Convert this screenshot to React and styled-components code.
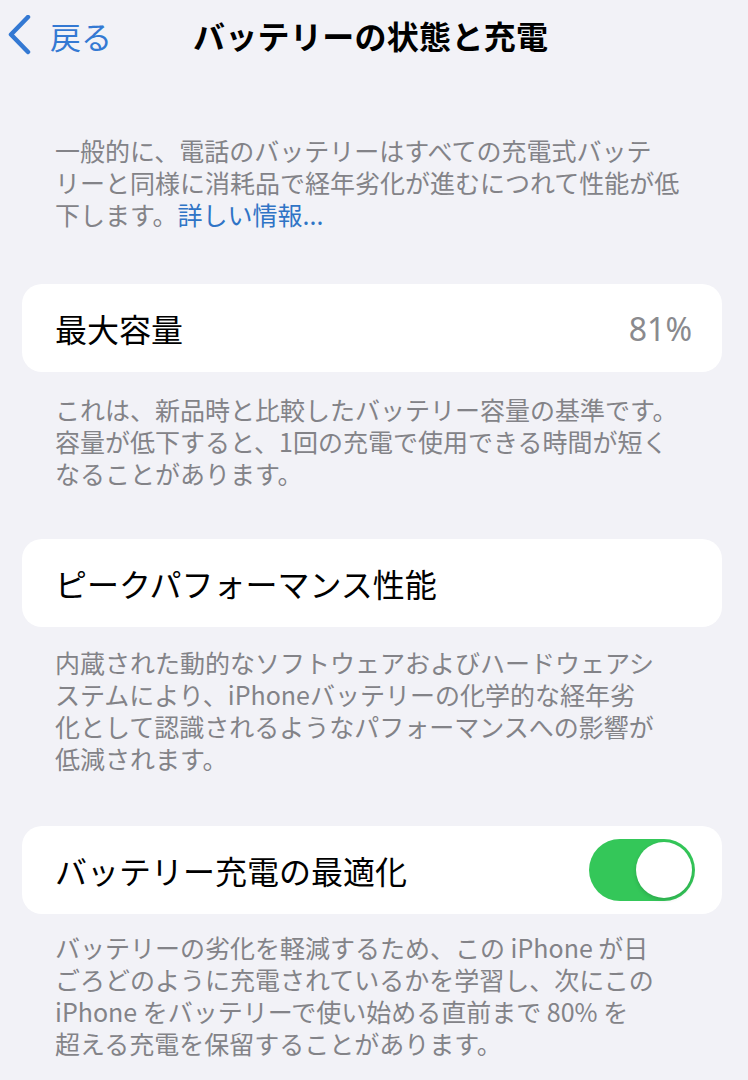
import React from "react";
import styled, { createGlobalStyle } from "styled-components";

const GlobalStyle = createGlobalStyle`
  body {
    margin: 0;
    background: #f2f2f7;
    font-family: "Noto Sans CJK JP", "Noto Sans", sans-serif;
  }
`;

const Page = styled.div`
  width: 748px;
  min-height: 1080px;
  background: #f2f2f7;
  overflow: hidden;
`;

const NavBar = styled.div`
  display: flex;
  align-items: center;
  height: 70px;
  padding-left: 7px;
`;

const Back = styled.div`
  display: flex;
  align-items: center;
  gap: 17px;
  color: #3479d3;
  font-size: 31px;
  width: 186px;
`;

const Title = styled.h1`
  margin: 0;
  font-size: 32px;
  font-weight: 700;
  color: #000;
  letter-spacing: 0.3px;
`;

const Note = styled.p`
  margin: ${(p) => p.$margin || "0"};
  padding: 0 0 0 55px;
  font-size: 25px;
  line-height: 32px;
  color: #838388;
  white-space: nowrap;
`;

const Link = styled.span`
  color: #2f74c6;
`;

const Card = styled.div`
  margin: 0 26px 0 22px;
  height: 88px;
  background: #fff;
  border-radius: 20px;
  display: flex;
  align-items: center;
  justify-content: space-between;
  padding: 0 30px 0 33px;
`;

const Label = styled.span`
  font-size: 32px;
  color: #000;
`;

const Value = styled.span`
  font-size: 32px;
  color: #8a8a8e;
  font-family: "Noto Sans", sans-serif;
`;

const Switch = styled.div`
  width: 106px;
  height: 62px;
  border-radius: 31px;
  background: #34c759;
  display: flex;
  align-items: center;
  justify-content: flex-end;
  padding: 3px;
  box-sizing: border-box;
  margin-right: -3px;
`;

const Knob = styled.div`
  width: 56px;
  height: 56px;
  border-radius: 50%;
  background: #fff;
  box-shadow: 0 2px 4px rgba(0, 0, 0, 0.15);
`;

const Chevron = () => (
  <svg width="26" height="40" viewBox="0 0 26 40">
    <path
      d="M21 2 L4 19.5 L21 37"
      fill="none"
      stroke="#3479d3"
      strokeWidth="4.5"
      strokeLinecap="round"
      strokeLinejoin="round"
    />
  </svg>
);

export default function App() {
  return (
    <Page>
      <GlobalStyle />
      <NavBar>
        <Back>
          <Chevron />
          <span>戻る</span>
        </Back>
        <Title>バッテリーの状態と充電</Title>
      </NavBar>

      <Note $margin="64px 0 54px">
        一般的に、電話のバッテリーはすべての充電式バッテ
        <br />
        リーと同様に消耗品で経年劣化が進むにつれて性能が低
        <br />
        下します。<Link>詳しい情報...</Link>
      </Note>

      <Card>
        <Label>最大容量</Label>
        <Value>81%</Value>
      </Card>
      <Note $margin="21px 0 50px">
        これは、新品時と比較したバッテリー容量の基準です。
        <br />
        容量が低下すると、1回の充電で使用できる時間が短く
        <br />
        なることがあります。
      </Note>

      <Card>
        <Label>ピークパフォーマンス性能</Label>
      </Card>
      <Note $margin="19px 0 52px">
        内蔵された動的なソフトウェアおよびハードウェアシ
        <br />
        ステムにより、iPhoneバッテリーの化学的な経年劣
        <br />
        化として認識されるようなパフォーマンスへの影響が
        <br />
        低減されます。
      </Note>

      <Card>
        <Label>バッテリー充電の最適化</Label>
        <Switch>
          <Knob />
        </Switch>
      </Card>
      <Note $margin="17px 0 0">
        バッテリーの劣化を軽減するため、この iPhone が日
        <br />
        ごろどのように充電されているかを学習し、次にこの
        <br />
        iPhone をバッテリーで使い始める直前まで 80% を
        <br />
        超える充電を保留することがあります。
      </Note>
    </Page>
  );
}
